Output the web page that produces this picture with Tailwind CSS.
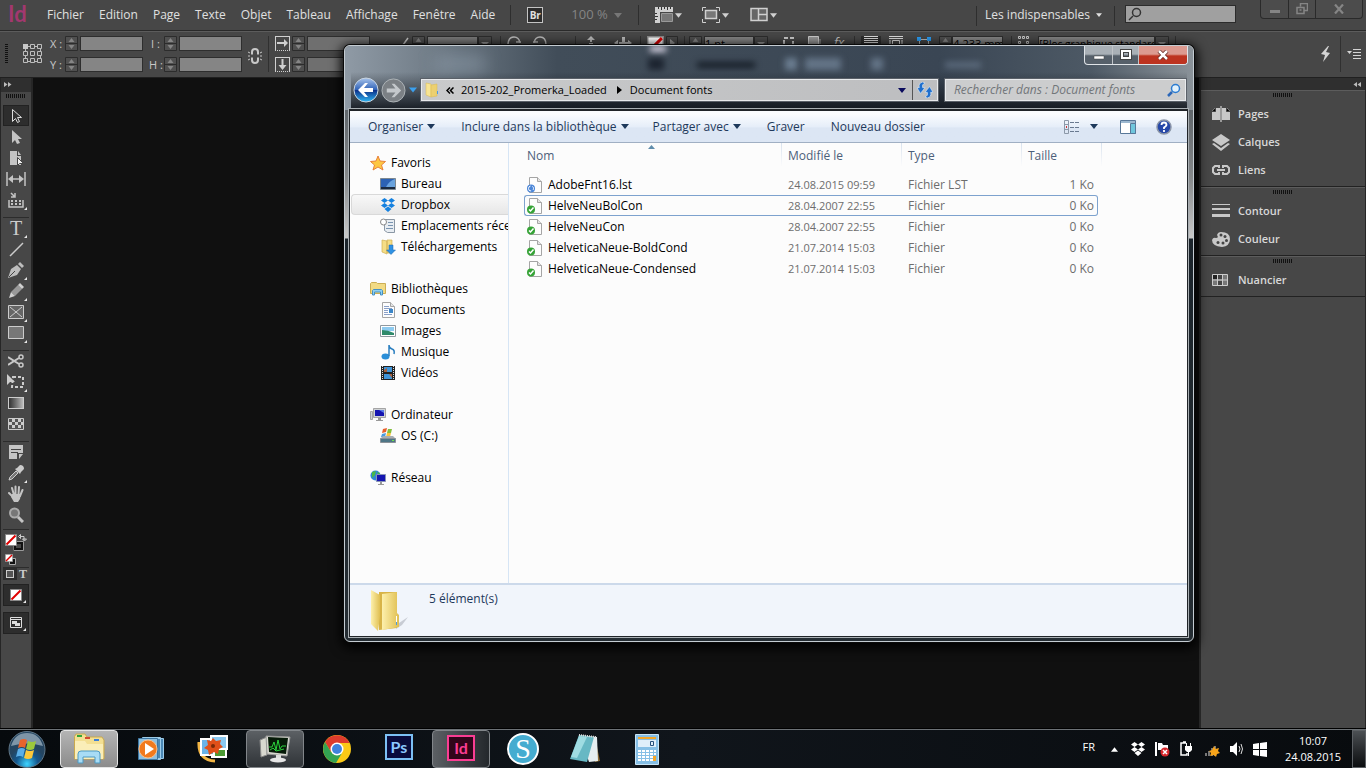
<!DOCTYPE html>
<html lang="fr">
<head>
    <meta charset="UTF-8">
    <meta name="viewport" content="width=device-width, initial-scale=1.0">
    <title>Document fonts</title>
    <script src="https://cdn.jsdelivr.net/npm/@tailwindcss/browser@4"></script>
</head>
<body class="h-screen overflow-hidden flex flex-col relative bg-[#101010] font-['Open_Sans','Noto_Sans',sans-serif] text-xs text-[#e0e0e0]">

    <!-- Shared symbols -->
    <svg class="hidden">
        <symbol id="spin" viewBox="0 0 13 15"><path fill="#505050" stroke="#2c2c2c" d="M.5.5h12v14H.5zM.5 7.500h12"/><path fill="#858585" d="M3.500 6l3-4 3 4zM3.500 9l3 4 3-4z"/></symbol>
        <symbol id="drop" viewBox="0 0 14 15"><path fill="#4a4a4a" stroke="#2c2c2c" d="M.5.5h13v14H.5z"/><path fill="#999" d="M3 6h8l-4 4z"/></symbol>
        <symbol id="down" viewBox="0 0 8 5"><path fill="currentColor" d="M0 0h8L4 5z"/></symbol>
        <symbol id="corner" viewBox="0 0 3 3"><path fill="#e8e8e8" d="M3 0v3H0z"/></symbol>
        <symbol id="grip" viewBox="0 0 20 5"><path stroke="#111" d="M.5 0v4m2-4v4m2-4v4m2-4v4m2-4v4m2-4v4m2-4v4m2-4v4m2-4v4m2-4v4"/></symbol>
        <symbol id="none" viewBox="0 0 12 12"><path fill="#fff" stroke="#8a8a8a" d="M.5.5h11v11H.5z"/><path stroke="#e00000" stroke-width="2" d="M1.500 10.500l9-9"/></symbol>
        <symbol id="dropbox" viewBox="0 0 16 16"><path fill="currentColor" d="M4.500 1L8 3.500 4.500 6 1 3.500zM11.500 1L15 3.500 11.500 6 8 3.500zM4.500 6L8 8.500 4.500 11 1 8.500zM11.500 6L15 8.500 11.500 11 8 8.500zM4.500 12L8 9.500l3.500 2.500L8 15z"/></symbol>
        <symbol id="sheet" viewBox="0 0 16 16"><path fill="#fdfdfd" stroke="#a5a5a5" d="M2.500.5h8l4 4v11h-12z"/><path fill="#e4e4e4" stroke="#a5a5a5" d="M10.500.5v4h4"/></symbol>
        <symbol id="synced" viewBox="0 0 16 16"><use href="#sheet"/><circle cx="4" cy="11.500" r="4" fill="#35a336"/><path fill="none" stroke="#fff" stroke-width="1.500" d="M2 11.500L3.500 13l3-3.500"/></symbol>
    </svg>

    <!-- InDesign menu bar -->
    <header class="h-[31px] shrink-0 flex items-start bg-[#474747] border-b border-[#2a2a2a]">
        <span class="w-[47px] pl-2 text-[22px] leading-7 font-bold text-[#a2386f] font-['Lato',sans-serif]">Id</span>
        <nav class="flex gap-[15px] h-[30px] items-center">
            <a href="#">Fichier</a>
            <a href="#">Edition</a>
            <a href="#">Page</a>
            <a href="#">Texte</a>
            <a href="#">Objet</a>
            <a href="#">Tableau</a>
            <a href="#">Affichage</a>
            <a href="#">Fenêtre</a>
            <a href="#">Aide</a>
        </nav>
        <div class="ml-[15px] h-[30px] flex items-center">
            <span class="w-px h-5 bg-[#2e2e2e]"></span>
            <button class="ml-4 w-4 h-4 border border-[#c4c4c4] bg-[#2d2d2d] text-[10px] leading-3 font-bold">Br</button>
            <span class="ml-7 text-[13px] text-[#858585]">100 %</span>
            <svg class="ml-1.5 w-2 h-[5px] text-[#777]"><use href="#down"/></svg>
            <span class="ml-4 w-px h-5 bg-[#2e2e2e]"></span>
            <button class="ml-4 flex items-center gap-0.5 text-[#d0d0d0]" aria-label="Options d'affichage">
                <svg class="w-[18px] h-4" viewBox="0 0 18 16"><path fill="#d0d0d0" d="M0 0h18v5H5v11H0z"/><path stroke="#333" d="M3.500 0v2m3-2v3m3-3v2m3-2v3m3-3v2M0 6.500h2m-2 3h3m-3 3h2"/><path fill="#777" stroke="#999" d="M6.500 6.500h11v8h-11z"/></svg>
                <svg class="w-[7px] h-[5px]"><use href="#down"/></svg>
            </button>
            <button class="ml-5 flex items-center gap-0.5 text-[#d0d0d0]" aria-label="Mode d'écran">
                <svg class="w-[18px] h-4" viewBox="0 0 18 16"><path fill="none" stroke="#d0d0d0" d="M.5 4V.5H4m10 0h3.500V4m0 8v3.500H14m-10 0H.5V12"/><path fill="#777" stroke="#d0d0d0" stroke-width="1.500" d="M3.500 3.500h11v8h-11z"/></svg>
                <svg class="w-[7px] h-[5px]"><use href="#down"/></svg>
            </button>
            <button class="ml-[21px] flex items-center gap-0.5 text-[#d0d0d0]" aria-label="Disposition">
                <svg class="w-[18px] h-4" viewBox="0 0 18 16"><path fill="#666" stroke="#d0d0d0" stroke-width="1.500" d="M1 1.500h16v12H1zM8.500 1v12M9 7.500h8"/></svg>
                <svg class="w-[7px] h-[5px]"><use href="#down"/></svg>
            </button>
        </div>
        <div class="ml-auto flex items-start">
            <span class="mt-1.5 w-px h-5 bg-[#2e2e2e]"></span>
            <button class="ml-2 h-[29px] flex items-center gap-1.5 whitespace-nowrap">Les indispensables
                <svg class="w-[6px] h-1"><use href="#down"/></svg>
            </button>
            <span class="ml-3 mt-1.5 w-px h-5 bg-[#2e2e2e]"></span>
            <label class="ml-2.5 mt-[5px] w-[111px] h-[18px] flex items-center bg-[#a0a0a0] border border-[#2c2c2c]">
                <svg class="ml-0.5 w-3.5 h-3.5 shrink-0" viewBox="0 0 14 14"><path fill="none" stroke="#333" stroke-width="1.500" d="M1 13l4-4"/><circle cx="8.500" cy="5.500" r="4" fill="none" stroke="#333" stroke-width="1.500"/></svg>
                <input class="w-full outline-none" aria-label="Rechercher">
            </label>
            <div class="ml-6 mr-[3px] h-[19px] flex border border-t-0 border-[#2a2a2a] rounded-b divide-x divide-[#2a2a2a] bg-[#4c4c4c]">
                <button class="w-7 flex justify-center items-center" aria-label="Réduire"><svg class="w-2.5 h-3" viewBox="0 0 10 12"><path fill="#858585" d="M0 7h10v3H0z"/></svg></button>
                <button class="w-[27px] flex justify-center items-center" aria-label="Restaurer"><svg class="w-3 h-3" viewBox="0 0 12 12"><path fill="none" stroke="#858585" stroke-width="1.500" d="M4.500 3.500v-3h7v7h-3M1 4.500h7v6H1zM3.500 7h2"/></svg></button>
                <button class="w-[46px] flex justify-center items-center" aria-label="Fermer"><svg class="w-2.5 h-2.5" viewBox="0 0 10 10"><path stroke="#858585" stroke-width="2.200" d="M1 .5l8 9m0-9l-8 9"/></svg></button>
            </div>
        </div>
    </header>

    <!-- InDesign control bar -->
    <section class="h-[47px] shrink-0 flex items-start pt-1 bg-[#474747] border-t border-b border-t-[#5c5c5c] border-b-[#202020] text-[11px] text-black overflow-hidden">
        <svg class="ml-[5px] mt-2 w-[3px] h-5" viewBox="0 0 3 20"><path stroke="#111" d="M0 .5h3m-3 2h3m-3 2h3m-3 2h3m-3 2h3m-3 2h3m-3 2h3m-3 2h3m-3 2h3m-3 2h3"/></svg>
        <svg class="ml-[15px] mt-2 w-5 h-5" viewBox="0 0 20 20"><path fill="none" stroke="#bdbdbd" d="M2.500 2.500h15v15h-15z"/><path fill="#474747" stroke="#bdbdbd" d="M7.500.5h4v4h-4zM14.500.5h4v4h-4zM.5 7.500h4v4h-4zM7.500 7.500h4v4h-4zM14.500 7.500h4v4h-4zM.5 14.500h4v4h-4zM7.500 14.500h4v4h-4zM14.500 14.500h4v4h-4z"/><path fill="#c8c8c8" d="M0 0h5v5H0z"/></svg>
        <div class="ml-[7px] grid grid-cols-[13px_13px_63px] gap-x-0.5 gap-y-1.5 leading-[15px] text-[#c8c8c8]">
            <label for="x" class="whitespace-nowrap">X :</label><svg class="w-[13px] h-[15px]"><use href="#spin"/></svg><input id="x" class="w-full h-[15px] bg-[#858585] border border-[#2e2e2e]">
            <label for="y" class="whitespace-nowrap">Y :</label><svg class="w-[13px] h-[15px]"><use href="#spin"/></svg><input id="y" class="w-full h-[15px] bg-[#858585] border border-[#2e2e2e]">
        </div>
        <div class="ml-1.5 grid grid-cols-[13px_13px_63px] gap-x-0.5 gap-y-1.5 leading-[15px] text-[#c8c8c8]">
            <label for="w" class="whitespace-nowrap pl-0.5">I :</label><svg class="w-[13px] h-[15px]"><use href="#spin"/></svg><input id="w" class="w-full h-[15px] bg-[#858585] border border-[#2e2e2e]">
            <label for="h" class="whitespace-nowrap">H :</label><svg class="w-[13px] h-[15px]"><use href="#spin"/></svg><input id="h" class="w-full h-[15px] bg-[#858585] border border-[#2e2e2e]">
        </div>
        <svg class="ml-1.5 mt-3 w-3.5 h-4" viewBox="0 0 14 16"><path fill="none" stroke="#c8c8c8" stroke-width="2" d="M4 6.500V4q0-3 3-3t3 3v2.500M4 9.500V12q0 3 3 3t3-3V9.500"/><path stroke="#c8c8c8" d="M0 4l2 1m-2 3h2m-2 4l2-1m12-7l-2 1m2 3h-2m2 4l-2-1"/></svg>
        <span class="ml-1.5 w-px h-9 bg-[#303030]"></span>
        <div class="ml-1.5 grid grid-cols-[15px_13px_63px] gap-x-0.5 gap-y-1.5">
            <svg class="w-[15px] h-[15px]" viewBox="0 0 15 15"><path fill="none" stroke="#d0d0d0" d="M0 .5h15M.5 0v15M14.500 0v15"/><path stroke="#d0d0d0" stroke-dasharray="1 1" d="M0 14.500h15"/><path fill="#d0d0d0" d="M2 6h7V3l4 4-4 4V8H2z"/></svg>
            <svg class="w-[13px] h-[15px]"><use href="#spin"/></svg><input aria-label="Échelle X" class="w-full h-[15px] bg-[#6f6f6f] border border-[#2e2e2e]">
            <svg class="w-[15px] h-[15px]" viewBox="0 0 15 15"><path fill="none" stroke="#d0d0d0" d="M0 .5h15M.5 0v15M14.500 0v15"/><path stroke="#d0d0d0" stroke-dasharray="1 1" d="M0 14.500h15"/><path fill="#d0d0d0" d="M6.500 2h2v6h3l-4 5-4-5h3z"/></svg>
            <svg class="w-[13px] h-[15px]"><use href="#spin"/></svg><input aria-label="Échelle Y" class="w-full h-[15px] bg-[#6f6f6f] border border-[#2e2e2e]">
        </div>
        <svg class="ml-8 w-2.5 h-3" viewBox="0 0 10 12"><path fill="none" stroke="#c8c8c8" stroke-width="1.500" d="M6 2L1 9h8"/></svg>
        <svg class="w-[13px] h-[15px]"><use href="#spin"/></svg>
        <input aria-label="Angle" class="ml-0.5 w-[51px] h-[15px] bg-[#7a7a7a] border border-[#2e2e2e]">
        <svg class="w-3.5 h-[15px]"><use href="#drop"/></svg>
        <span class="ml-2 w-px h-9 bg-[#303030]"></span>
        <svg class="ml-1.5 w-[14px] h-3" viewBox="0 0 14 12"><path fill="none" stroke="#bbb" stroke-width="1.500" d="M1 9q0-8 6-8 5 0 6 6m-4-1h5"/></svg>
        <svg class="ml-3 w-[14px] h-3" viewBox="0 0 14 12"><path fill="none" stroke="#bbb" stroke-width="1.500" d="M13 9q0-8-6-8-5 0-6 6m4-1H0"/></svg>
        <span class="ml-7 w-px h-9 bg-[#303030]"></span>
        <svg class="ml-2 w-[14px] h-3" viewBox="0 0 14 12"><path fill="#bbb" d="M7 0l4 4H8v2H6V4H3zM5 7h4v4H5z"/></svg>
        <svg class="ml-4 w-[18px] h-3" viewBox="0 0 18 12"><path fill="#bbb" d="M0 7l4-3v6zM18 7l-4-3v6zM8 1h3v9H8zM5 6h9v2H5z"/></svg>
        <span class="ml-2 w-px h-9 bg-[#303030]"></span>
        <svg class="ml-1.5 w-[17px] h-[17px]"><use href="#none"/></svg>
        <svg class="ml-0.5 w-3 h-[15px]" viewBox="0 0 12 15"><path fill="#4a4a4a" stroke="#2c2c2c" d="M.5.5h11v14H.5z"/><path fill="#999" d="M4 3l5 4-5 4z"/></svg>
        <span class="ml-1.5 w-px h-9 bg-[#303030]"></span>
        <svg class="ml-1 w-[13px] h-[15px]"><use href="#spin"/></svg>
        <input aria-label="Épaisseur" value="1 pt" class="ml-0.5 w-[50px] h-[15px] bg-[#858585] border border-[#2e2e2e]">
        <svg class="w-3.5 h-[15px]"><use href="#drop"/></svg>
        <svg class="ml-3.5 w-3.5 h-3.5" viewBox="0 0 14 14"><path fill="none" stroke="#ccc" stroke-width="2" stroke-dasharray="4 2" d="M2 2h9v9H2z"/></svg>
        <svg class="ml-3 w-3.5 h-3.5" viewBox="0 0 14 14"><path fill="#999" stroke="#ccc" d="M.5.5h10v10H.5z"/><path stroke="#777" stroke-width="2" d="M12 3v10"/></svg>
        <span class="ml-3 text-[13px] leading-3 italic text-[#ccc]">fx</span>
        <span class="ml-2.5 w-px h-9 bg-[#303030]"></span>
        <svg class="ml-1.5 w-5 h-4 bg-[#2f2f2f]" viewBox="0 0 20 16"><path stroke="#ddd" d="M3 .5h14M3 2.500h14M3 4.500h14M3 6.500h14"/></svg>
        <svg class="ml-2 w-3.5 h-4" viewBox="0 0 14 16"><path stroke="#ddd" d="M0 .5h14M0 2.500h14"/><path fill="none" stroke="#ddd" d="M3.500 9V4.500h7V9M1 4v8m12-8v8"/></svg>
        <svg class="ml-3.5 w-3.5 h-4" viewBox="0 0 14 16"><path stroke="#bbb" d="M1 3.500h12M2.500 4v8m9-8v8"/><path fill="#2a9df4" d="M0 1h4v4H0zM10 1h4v4h-4z"/></svg>
        <svg class="ml-2 w-[13px] h-[15px]"><use href="#spin"/></svg>
        <input aria-label="Habillage" value="4,233 mm" class="w-[51px] h-[15px] bg-[#858585] border border-[#2e2e2e]">
        <span class="ml-2 w-px h-9 bg-[#303030]"></span>
        <svg class="ml-1.5 w-3 h-3.5" viewBox="0 0 12 14"><path fill="none" stroke="#ccc" d="M.5.5h2v2h-2zM4.500.5h2v2h-2zM8.500.5h2v2h-2zM.5 5.500h2v2h-2zM8.500 5.500h2v2h-2z"/></svg>
        <select aria-label="Style d'objet" class="ml-2 w-[117px] h-[15px] text-[10px] leading-3 appearance-none bg-[#858585] border border-[#2e2e2e]"><option>[Bloc graphique standard]</option></select>
        <svg class="w-3.5 h-[15px]"><use href="#drop"/></svg>
        <span class="ml-1.5 w-px h-9 bg-[#303030]"></span>
        <svg class="ml-auto mt-2.5 w-3 h-4 shrink-0" viewBox="0 0 12 16"><path fill="#d4d4d4" d="M8 0L1 8l4 1-2 7 7-9-4-1 3-6z"/></svg>
        <span class="ml-2 w-px h-9 bg-[#303030]"></span>
        <svg class="ml-1.5 mr-[5px] mt-3 w-3.5 h-3 shrink-0" viewBox="0 0 14 12"><path fill="#d4d4d4" d="M0 3h5L2.500 6z"/><path stroke="#d4d4d4" d="M6 1.500h8M6 4.500h8M6 7.500h8M6 10.500h8"/></svg>
    </section>

    <main class="flex-1 min-h-0 flex border-b border-black">
        <!-- Tools -->
        <aside class="w-[33px] shrink-0 flex flex-col bg-[#474747] border-l border-r-2 border-[#262626]">
            <div class="h-3.5 shrink-0 bg-[#2f2f2f] pt-1 pl-[3px]"><svg class="w-2 h-[5px]" viewBox="0 0 8 5"><path fill="#bbb" d="M0 0l3.500 2.500L0 5zM4 0l3.500 2.500L4 5z"/></svg></div>
            <svg class="mx-auto mt-0.5 w-5 h-[5px] shrink-0"><use href="#grip"/></svg>
            <div class="mt-1.5 mx-0.5 flex flex-col *:h-[21px] *:shrink-0 *:flex *:items-center *:justify-center *:relative">
                <button class="bg-[#2d2d2d] border border-[#222]" aria-label="Sélection"><svg class="w-4 h-4" viewBox="0 0 16 16"><path fill="#333" stroke="#ddd" d="M4.500 1.500v12l3-3 2 4 2-1-2-4h4z"/></svg></button>
                <button aria-label="Sélection directe"><svg class="w-4 h-4" viewBox="0 0 16 16"><path fill="#c4c4c4" d="M4 1v13l3-3 2 4 3-1-2-4h4z"/></svg></button>
                <button aria-label="Page"><svg class="w-4 h-4" viewBox="0 0 16 16"><path fill="#c4c4c4" d="M2 1h7v5h4v9H2zM10 1l3 4h-3z"/><path fill="#eee" stroke="#444" d="M9.500 7.500v8l2-2h4z"/></svg></button>
                <button aria-label="Espace"><svg class="w-5 h-4" viewBox="0 0 20 16"><path stroke="#c4c4c4" stroke-width="1.500" d="M1 1v14M19 1v14M4 8h12"/><path fill="#c4c4c4" d="M2 8l5-4v8zM18 8l-5-4v8z"/></svg></button>
                <button aria-label="Récupérateur de contenu"><svg class="w-4 h-4" viewBox="0 0 16 16"><path fill="none" stroke="#c4c4c4" stroke-width="1.500" d="M1 8v7h14V8M3 1l4 4M7 1v4H3"/><path fill="#c4c4c4" d="M3 8h2v2H3zM7 8h2v2H7zM11 8h2v2h-2zM3 11h2v2H3zM7 11h2v2H7zM11 11h2v2h-2z"/></svg><svg class="absolute right-0.5 bottom-0 w-[3px] h-[3px]"><use href="#corner"/></svg></button>
                <button class="mt-[7px] border-t border-[#2c2c2c] font-['Liberation_Serif',serif] text-[20px] text-[#ccc]">T<svg class="absolute right-0.5 bottom-0 w-[3px] h-[3px]"><use href="#corner"/></svg></button>
                <button aria-label="Trait"><svg class="w-4 h-4" viewBox="0 0 16 16"><path stroke="#ccc" stroke-width="1.500" d="M2 15L15 2"/></svg></button>
                <button aria-label="Plume"><svg class="w-4 h-4" viewBox="0 0 16 16"><path fill="#bdbdbd" d="M0 16l3-9 6-4 4 4-4 6zM10 2l2-2 4 4-2 2z"/><path stroke="#444" d="M1 15l6-6"/></svg><svg class="absolute right-0.5 bottom-0 w-[3px] h-[3px]"><use href="#corner"/></svg></button>
                <button aria-label="Crayon"><svg class="w-4 h-4" viewBox="0 0 16 16"><path fill="#999" d="M3 9l7-7 4 4-7 7z"/><path fill="#d0d0d0" d="M10 2l2-2 4 4-2 2zM3 9l4 4-6 2z"/></svg><svg class="absolute right-0.5 bottom-0 w-[3px] h-[3px]"><use href="#corner"/></svg></button>
                <button aria-label="Bloc rectangulaire"><svg class="w-4 h-[14px]" viewBox="0 0 16 14"><path fill="#666" stroke="#ccc" d="M.5.5h15v13H.5zM2 2l12 10M14 2L2 12"/></svg><svg class="absolute right-0.5 bottom-0 w-[3px] h-[3px]"><use href="#corner"/></svg></button>
                <button aria-label="Rectangle"><svg class="w-4 h-[14px]" viewBox="0 0 16 14"><path fill="#777" stroke="#ccc" d="M.5.5h15v12H.5z"/></svg><svg class="absolute right-0.5 bottom-0 w-[3px] h-[3px]"><use href="#corner"/></svg></button>
                <button class="mt-[7px] border-t border-[#2c2c2c]" aria-label="Ciseaux"><svg class="w-4 h-4" viewBox="0 0 16 16"><path fill="none" stroke="#c8c8c8" stroke-width="2" d="M0 4l11 7M0 12l11-7"/><circle cx="13" cy="4" r="2" fill="none" stroke="#c8c8c8" stroke-width="1.500"/><circle cx="13" cy="12" r="2" fill="none" stroke="#c8c8c8" stroke-width="1.500"/></svg></button>
                <button aria-label="Transformation"><svg class="w-[18px] h-4" viewBox="0 0 18 16"><path fill="none" stroke="#ccc" stroke-width="2" stroke-dasharray="3 2" d="M6 3h10v10H5z"/><path fill="#ccc" d="M0 0v11l3-3h5z"/></svg><svg class="absolute right-0.5 bottom-0 w-[3px] h-[3px]"><use href="#corner"/></svg></button>
                <button aria-label="Nuance de dégradé"><span class="w-4 h-3 border border-[#ccc] bg-linear-to-r from-[#333] to-[#bbb]"></span></button>
                <button aria-label="Contour progressif de dégradé"><svg class="w-4 h-3" viewBox="0 0 16 12"><path fill="#555" stroke="#ccc" d="M.5.5h15v11H.5z"/><path fill="#ccc" d="M1 4h3v3H1zM7 4h3v3H7zM4 1h3v3H4zM10 1h3v3h-3zM4 7h3v3H4zM10 7h3v3h-3zM13 4h2v3h-2z"/></svg></button>
                <button class="mt-[7px] border-t border-[#2c2c2c]" aria-label="Note"><svg class="w-4 h-4" viewBox="0 0 16 16"><path fill="#c4c4c4" d="M1 1h14v8H9v6H1zM11 10h4l-4 5z"/><path stroke="#444" d="M3 5.500h10M3 8.500h7"/></svg></button>
                <button aria-label="Pipette"><svg class="w-4 h-4" viewBox="0 0 16 16"><path fill="#777" stroke="#ccc" d="M1 15l1-3 6-6 2 2-6 6z"/><path fill="#ccc" d="M7 4l5 5 1-2 3-3q0-4-4-4L9 3z"/></svg><svg class="absolute right-0.5 bottom-0 w-[3px] h-[3px]"><use href="#corner"/></svg></button>
                <button aria-label="Main"><svg class="w-4 h-[17px]" viewBox="0 0 16 17"><path fill="none" stroke="#c4c4c4" stroke-width="2" stroke-linecap="round" d="M1 8l4 4M4 3l2 7M7.500 1.500V9M11 2l-.5 7M14.500 5L12 11"/><path fill="#c4c4c4" d="M4 9h9l-1 5-2 3H6l-3-5z"/></svg></button>
                <button aria-label="Zoom"><svg class="w-4 h-4" viewBox="0 0 16 16"><circle cx="6.500" cy="6" r="4.500" fill="#777" stroke="#aaa" stroke-width="2"/><path stroke="#c4c4c4" stroke-width="3" d="M10 10l5 5"/></svg></button>
            </div>
            <div class="mt-1 mx-0.5 pt-1 border-t border-[#2c2c2c] flex flex-col gap-px">
                <svg class="ml-0.5 w-[22px] h-[19px]" viewBox="0 0 22 19"><path fill="none" stroke="#999" d="M9 7.500h9.500v9H9z"/><path fill="none" stroke="#111" stroke-width="2" d="M10 9h7v6h-7z"/><use href="#none" width="12" height="12"/><path fill="none" stroke="#ccc" d="M15 2.500h4v4M13.500 2.500l2-2v4zM19.500 7l2-2h-4z"/></svg>
                <svg class="ml-0.5 w-3 h-3" viewBox="0 0 12 12"><path fill="#111" stroke="#aaa" d="M4.500 4.500h6v6h-6z"/><use href="#none" width="8" height="8"/></svg>
                <div class="flex border-t border-[#2c2c2c]">
                    <button class="w-3.5 h-3 bg-[#2d2d2d] flex items-center justify-center" aria-label="Conteneur"><span class="w-2 h-2 border border-[#ccc] bg-[#555]"></span></button>
                    <button class="w-3 h-3 text-[12px] leading-3 font-bold font-['Liberation_Serif',serif] text-[#ccc]">T</button>
                </div>
            </div>
            <button class="mt-1 mx-0.5 h-[22px] flex items-center justify-center relative bg-[#2d2d2d] border border-[#222]" aria-label="Sans"><svg class="w-3 h-3"><use href="#none"/></svg><svg class="absolute right-0.5 bottom-0.5 w-[3px] h-[3px]"><use href="#corner"/></svg></button>
            <button class="mt-1.5 mx-0.5 h-[22px] flex items-center justify-center relative bg-[#2d2d2d] border border-[#222]" aria-label="Mode normal"><svg class="w-3 h-3" viewBox="0 0 12 12"><path fill="none" stroke="#ddd" d="M.5.5h11v10H.5zM0 2.500h12"/><path fill="#ddd" d="M2 4h5v3H2zM5 6h5v3H5z"/></svg><svg class="absolute right-0.5 bottom-0.5 w-[3px] h-[3px]"><use href="#corner"/></svg></button>
        </aside>

        <!-- Panels -->
        <aside class="ml-auto w-[167px] shrink-0 bg-[#474747] border-l-2 border-r border-[#262626] text-[11px] font-semibold leading-7 text-[#d8d8d8]">
            <div class="h-3 bg-[#2f2f2f] flex justify-end pt-1 pr-1"><svg class="w-2 h-[5px]" viewBox="0 0 8 5"><path fill="#bbb" d="M4 0L.5 2.500 4 5zM8 0L4.500 2.500 8 5z"/></svg></div>
            <div class="border-t border-[#5c5c5c] border-b border-b-[#222] pb-0.5">
                <svg class="mx-auto mt-0.5 mb-0.5 w-5 h-[5px]"><use href="#grip"/></svg>
                <a href="#" class="flex items-center gap-2 pl-[11px]"><svg class="w-[18px] h-4" viewBox="0 0 18 16"><path fill="#c8c8c8" d="M0 14V5l3-3h5v12zM18 14V5l-3-3h-5v12z"/><path stroke="#444" d="M0 5.500h3.500V2M18 5.500h-3.500V2"/><path stroke="#eee" d="M9 0v16"/></svg>Pages</a>
                <a href="#" class="flex items-center gap-2 pl-[11px]"><svg class="w-[18px] h-[17px]" viewBox="0 0 18 17"><path fill="#c8c8c8" d="M9 0l9 6-9 6-9-6zM0 10l2-1 7 5 7-5 2 1-9 7z"/></svg>Calques</a>
                <a href="#" class="flex items-center gap-2 pl-[11px]"><svg class="w-[18px] h-3" viewBox="0 0 18 12"><path fill="none" stroke="#c8c8c8" stroke-width="2" d="M7 4V2H3L1 4v4l2 2h4V8M11 4V2h4l2 2v4l-2 2h-4V8M5 6h8"/></svg>Liens</a>
            </div>
            <div class="border-t border-[#5c5c5c] border-b border-b-[#222] pb-0.5">
                <svg class="mx-auto mt-0.5 mb-0.5 w-5 h-[5px]"><use href="#grip"/></svg>
                <a href="#" class="flex items-center gap-2 pl-[11px]"><svg class="w-[18px] h-3.5" viewBox="0 0 18 14"><path fill="#c8c8c8" d="M0 0h18v1H0zM0 4h18v2H0zM0 10h18v3H0z"/></svg>Contour</a>
                <a href="#" class="flex items-center gap-2 pl-[11px]"><svg class="w-[18px] h-[15px]" viewBox="0 0 18 15"><path fill="#c8c8c8" d="M9 0q9 0 9 7t-8 8Q0 14 0 8q1-3 4-2 3 0 1-3 1-3 4-3z"/><g fill="#444"><circle cx="9" cy="3" r="1.500"/><circle cx="13" cy="4.500" r="1.500"/><circle cx="14.500" cy="8.500" r="1.500"/><circle cx="11" cy="11" r="1.500"/><circle cx="6" cy="10.500" r="1.500"/></g></svg>Couleur</a>
            </div>
            <div class="border-t border-[#5c5c5c] border-b border-b-[#222] pb-0.5">
                <svg class="mx-auto mt-0.5 mb-0.5 w-5 h-[5px]"><use href="#grip"/></svg>
                <a href="#" class="flex items-center gap-2 pl-[11px]"><svg class="w-[18px] h-3" viewBox="0 0 18 12"><path fill="#777" stroke="#ccc" d="M.5.5h15v11H.5zM5.500 0v12M10.500 0v12M0 6h16"/><path fill="#222" d="M1 1h4v4H1z"/><path fill="#444" d="M6 1h4v4H6zM6 7h4v4H6z"/></svg>Nuancier</a>
            </div>
        </aside>
    </main>

    <!-- Taskbar -->
    <footer class="h-[39px] shrink-0 flex items-stretch border-t border-[#6d7276] bg-[linear-gradient(90deg,#060a0d,#10151b_50%,#080b0e)] text-white">
        <button class="ml-2 mr-[14px] w-[38px] flex items-center justify-center" aria-label="Démarrer">
            <svg class="w-[38px] h-[37px]" viewBox="0 0 38 37"><defs><radialGradient id="orb" cy=".9"><stop offset="0" stop-color="#3fd4ff"/><stop offset=".6" stop-color="#14588f"/><stop offset="1" stop-color="#244561"/></radialGradient></defs><circle cx="19" cy="18.500" r="18" fill="url(#orb)" stroke="#5f7687"/><path fill="#d8e6ee" opacity=".5" d="M3 15Q7 2 19 2t16 13q-16-5-32 0z"/><path fill="#e8642c" d="M12 9q4-2 7 0l-2 8q-3-2-7 0z"/><path fill="#9cc93c" d="M20 10q4 2 8 0l-2 8q-4 2-8 0z"/><path fill="#5aaee8" d="M10 18q4-2 7 0l-2 8q-3-2-7 0z"/><path fill="#fcc83a" d="M18 19q4 2 8 0l-2 8q-4 2-8 0z"/></svg>
        </button>
        <div class="flex gap-1 *:w-[58px] *:flex *:items-center *:justify-center">
            <button class="border border-[#e4e4e4] rounded-sm bg-linear-to-b from-[#b4b4b4] to-[#8c8c8c]" aria-label="Explorateur">
                <svg class="w-8 h-8" viewBox="0 0 32 32"><path fill="#f3df92" stroke="#c9a94e" d="M1.500 26V3.500L3 1h9l2 3h15l2 3v19z"/><path fill="#faeeb8" d="M2 8h10l2 3h16v15H2z"/><path fill="#31a53c" d="M4 2h5v2H4z"/><path fill="#d34a31" d="M12 4h5v2h-5z"/><path fill="#3d7fd6" d="M21 6h5v2h-5z"/><path fill="#a8dcf5" stroke="#4d9ac4" d="M5 30V21q0-3 3-3h16q3 0 3 3v9h-5v-6H10v6z"/></svg>
            </button>
            <button aria-label="Lecteur Windows Media"><svg class="w-7 h-7" viewBox="0 0 28 28"><path fill="#4b88b5" stroke="#9ccbe8" d="M8.500 3.500h18v20h-18zM5.500 2.500h18v22h-18z"/><path fill="#8fc0e0" stroke="#3c77a3" d="M1.500 3.500h19v21h-19z"/><circle cx="11" cy="14" r="9" fill="#f17a1e" stroke="#fbc08a"/><path fill="#fff" d="M8 8l9 6-9 6z"/></svg></button>
            <button aria-label="Galerie de photos"><svg class="w-8 h-8" viewBox="0 0 32 32"><path fill="none" stroke="#f2b544" stroke-width="3" d="M2 9q-1 18 16 19"/><path fill="#4c9a34" stroke="#fff" stroke-width="2" d="M15 13h14v11H15z"/><path fill="#6ab3e8" stroke="#fff" stroke-width="2" d="M4 6h13v16H4z"/><path fill="#8ac8f0" stroke="#fff" stroke-width="2" d="M14 3h16v13H14z"/><path fill="#e0501a" d="M16 5l3 3 5-1-1 4 3 3-4 2-1 5-4-2-5 3-1-5-4-2 4-3-1-5 4 1z"/><circle cx="16" cy="13" r="2" fill="#7a2a08"/></svg></button>
            <button class="border border-[#82868a] rounded-sm bg-linear-to-b from-[#5c6064] to-[#303438]" aria-label="Moniteur de ressources"><svg class="w-8 h-7" viewBox="0 0 32 28"><path fill="#d8d8d0" stroke="#888" d="M1 5l7-3v18l-6 2z"/><path fill="#d8d8d0" stroke="#999" d="M7 1l24 1-3 19-20-2z"/><path fill="#061a08" d="M9 2l20 1-2 16-17-2z"/><path fill="none" stroke="#2bd33c" d="M10 12h3l2-5 2 8 2-10 2 9 2-3h4M11 15l3-2 3 3 8-2"/><path fill="#ddd" d="M17 20h5v4h-5z"/><ellipse cx="19" cy="25" rx="8" ry="2.500" fill="#e6e6e6"/></svg></button>
            <button aria-label="Chrome"><svg class="w-7 h-7" viewBox="0 0 28 28"><circle cx="14" cy="14" r="14" fill="#fbc916"/><path fill="#dd3b2d" d="M2 7a14 14 0 0 1 24.500 1H14L8 17z"/><path fill="#33a352" d="M2 7a14 14 0 0 0 11 21l6-10-5 2-6-3z"/><circle cx="14" cy="14" r="6.500" fill="#fff"/><circle cx="14" cy="14" r="5" fill="#3f83dd"/></svg></button>
            <button aria-label="Photoshop"><span class="mb-1 w-7 h-[26px] border-2 border-[#7cc0f4] bg-[#090b3c] text-[#8cc8ff] text-[16px] leading-[22px] font-bold font-['Lato',sans-serif]">Ps</span></button>
            <button class="border border-[#82868a] rounded-sm bg-linear-to-r from-[#5c6064] to-[#24282c]" aria-label="InDesign"><span class="mb-0.5 w-7 h-[26px] border-2 border-[#fb3d93] bg-[#31051a] text-[#fb3d93] text-[16px] leading-[22px] font-bold font-['Lato',sans-serif]">Id</span></button>
            <button aria-label="S"><span class="w-8 h-8 rounded-full border-2 border-white bg-[#45acd0] font-['Liberation_Serif',serif] text-[28px] leading-7">S</span></button>
            <button aria-label="Bloc-notes"><svg class="w-8 h-[30px]" viewBox="0 0 32 30"><path fill="#8a6a34" d="M26 3l5 24-5 1z"/><path fill="#e6eef0" d="M11 1l17 2 1 24-9 1z"/><path fill="#67b8c4" d="M10 1l15 2-7 25-17-3z"/><path fill="#9fdce2" d="M10 2l8 1L8 24l-6-1z"/><path stroke="#ddd" stroke-dasharray="1 1" stroke-width="2" d="M10 1l17 2"/></svg></button>
            <button aria-label="Calculatrice"><svg class="w-6 h-[31px]" viewBox="0 0 24 31"><path fill="#86bfe6" stroke="#c8e4f6" d="M.5.5h23v30H.5z"/><path fill="#f5a72a" d="M3 3h18v2H3z"/><path fill="#dfeefa" d="M3 6h18v7H3z"/><path fill="none" stroke="#27507d" d="M15.500 7.500h3v4h-3z"/><path stroke="#fff" stroke-width="2" stroke-dasharray="3 1" d="M3 17h18M3 20h18M3 23h18M3 26h18"/><path fill="#f5a72a" d="M18 22h3v5h-3z"/></svg></button>
        </div>
        <div class="ml-auto flex items-center text-[11px]">
            <span class="pb-1">FR</span>
            <svg class="ml-4 w-[7px] h-[5px]" viewBox="0 0 8 5"><path fill="#fff" d="M0 5h8L4 0z"/></svg>
            <svg class="ml-3 w-4 h-4"><use href="#dropbox"/></svg>
            <svg class="ml-2 w-4 h-4" viewBox="0 0 16 16"><path fill="#fff" d="M1 1h2v14H1zM4 2h4l1 2h5v6H8L7 9H4z"/><circle cx="11" cy="11" r="4.500" fill="#d6262b"/><path stroke="#fff" stroke-width="1.500" d="M9 9l4 4m0-4l-4 4"/></svg>
            <svg class="ml-2 w-4 h-4" viewBox="0 0 16 16"><path fill="none" stroke="#fff" stroke-width="1.500" d="M8 2H3v12h6v-2M5 1h3"/><path fill="#fff" d="M7 5h7v4l-2 2H9L7 9zM8 2h1v3H8zM12 2h1v3h-1zM10 11h1v4h-1z"/></svg>
            <svg class="ml-2.5 w-4 h-4" viewBox="0 0 16 16"><path fill="#777" d="M1 12h2v3H1zM4 10h2v5H4zM7 7h2v8H7zM10 5h2v10h-2z"/><path fill="#f9a51a" d="M10 5l1.500 3L15 7l-1 3 2 2-3 1-1 3-2-2-4 1 1-3-2-2 3-1z"/></svg>
            <svg class="ml-2 w-4 h-4" viewBox="0 0 16 16"><path fill="#fff" d="M2 5h3l4-4v14l-4-4H2z"/><path fill="none" stroke="#ddd" d="M11 5q2 3 0 6M13 3q3 5 0 10"/></svg>
            <svg class="ml-2 w-4 h-4" viewBox="0 0 16 16"><path fill="#fff" d="M1 3l6-1v6H1zM8 2l7-1v7H8zM1 9h6v6l-6-1zM8 9h7v7l-7-1z"/></svg>
            <div class="ml-4 w-[58px] text-center leading-4 whitespace-nowrap"><div>10:07</div><div>24.08.2015</div></div>
            <button class="ml-2.5 w-3.5 h-full border border-[#5c6064] bg-linear-to-b from-[#4c5054] to-[#0c0e10]" aria-label="Afficher le bureau"></button>
        </div>
    </footer>

    <!-- Explorer window -->
    <div class="absolute left-[344px] right-[172px] top-[45px] bottom-[126px] flex flex-col overflow-hidden rounded-md border border-[#c4ccd2] shadow-[0_0_0_1px_#0a0a0a,0_3px_12px_3px_#000] text-black bg-[linear-gradient(#77797c_0,#60666b_64px,#85888a_130px,#c8c8c8_192px,#1b242b_193px,#252d33_100%)]">
        <div class="absolute inset-x-0 top-0 h-[64px] bg-[linear-gradient(90deg,#8f9aa5_0,#6c7883_12%,#414d59_25%,#3a4654_70%,#4d5965_88%,#8a9299_100%)]"></div>
        <div class="absolute inset-x-[6px] top-[26px] h-[40px] bg-[linear-gradient(transparent,#12171e)]"></div>
        <!-- Blurred controls seen through the glass -->
        <div class="absolute left-[90px] top-3 w-[50px] h-3 bg-[#93a1b0]/60 blur-sm"></div>
        <div class="absolute left-[305px] top-0 w-4 h-1.5 bg-[#d9d4e4] blur-[3px]"></div>
        <div class="absolute left-[303px] top-3 w-4 h-3 bg-[#1c2430] blur-[3px]"></div>
        <div class="absolute left-[352px] top-4 w-[58px] h-1.5 bg-[#161d27] blur-[3px]"></div>
        <div class="absolute left-[440px] top-3 w-3 h-3 bg-[#8ba0b8]/60 blur-[3px]"></div>
        <div class="absolute left-[460px] top-3 w-[36px] h-3 bg-[#8ba0b8]/50 blur-[3px]"></div>
        <div class="absolute left-[526px] top-3 w-3 h-3 bg-[#8ba0b8]/50 blur-[3px]"></div>
        <div class="absolute left-[600px] top-4 w-[36px] h-1.5 bg-[#8ba0b8]/40 blur-[3px]"></div>

        <div class="relative h-8 shrink-0 flex justify-end items-start">
            <div class="mr-[5px] h-[19px] flex rounded-b border border-t-0 border-[#e0e4e8] divide-x divide-[#c0c4c8] overflow-hidden bg-linear-to-b from-[#a9b0b6] from-45% to-[#56606a] to-55%">
                <button class="w-7 flex items-center justify-center" aria-label="Réduire"><svg class="w-3 h-3" viewBox="0 0 12 12"><path fill="#fff" stroke="#444" stroke-width=".5" d="M1 7h10v3H1z"/></svg></button>
                <button class="w-[26px] flex items-center justify-center" aria-label="Agrandir"><svg class="w-3 h-3" viewBox="0 0 12 12"><path fill="none" stroke="#444" stroke-width="4" d="M2 2h8v7H2z"/><path fill="none" stroke="#fff" stroke-width="2" d="M2 2h8v7H2z"/></svg></button>
                <button class="w-[48px] flex items-center justify-center bg-linear-to-b from-[#dc9a90] from-45% to-[#bd3320] to-55%" aria-label="Fermer"><svg class="w-3 h-2.5" viewBox="0 0 12 10"><path stroke="#5c2018" stroke-width="4" d="M2 1l8 8m0-8L2 9"/><path stroke="#fff" stroke-width="2.500" d="M2 1l8 8m0-8L2 9"/></svg></button>
            </div>
        </div>
        <!-- Address bar -->
        <div class="relative h-6 shrink-0 flex items-center pl-2 pr-[7px]">
            <button aria-label="Précédent"><svg class="w-[26px] h-[26px]" viewBox="0 0 26 26"><defs><linearGradient id="back" x2="0" y2="1"><stop offset="0" stop-color="#a8c4ec"/><stop offset=".48" stop-color="#3264b8"/><stop offset=".5" stop-color="#0c2c86"/><stop offset="1" stop-color="#2fb8f4"/></linearGradient></defs><circle cx="13" cy="13" r="12" fill="url(#back)" stroke="#c8d4e0"/><path fill="#fff" d="M5 13l7-7h3l-4 5h9v4h-9l4 5h-3z"/></svg></button>
            <button class="ml-0.5" aria-label="Suivant"><svg class="w-[25px] h-[25px]" viewBox="0 0 26 26"><circle cx="13" cy="13" r="12" fill="#7b8085" stroke="#aeb4b8"/><path fill="#c4c8cc" d="M21 13l-7-7h-3l4 5H6v4h9l-4 5h3z"/></svg></button>
            <svg class="ml-[3px] w-2 h-[6px] text-[#3ba0ee]"><use href="#down"/></svg>
            <div class="ml-1 flex-1 h-[22px] flex items-center border border-[#e8eaec] outline outline-[#5a6068] bg-linear-to-r from-[#c9cacb] to-[#bdbec0] text-[11px]">
                <svg class="ml-0.5 w-4 h-4" viewBox="0 0 16 16"><path fill="#f8e492" stroke="#d8b850" stroke-width=".5" d="M2 1l5 1v13l-5-2z"/><path fill="#ecd070" stroke="#d8b850" stroke-width=".5" d="M7 3l6-1v12l-6 1z"/><path fill="#4a9be4" d="M13 9h1v3h-1z"/></svg>
                <svg class="ml-1.5 w-2 h-[7px]" viewBox="0 0 8 7"><path fill="none" stroke="#000" stroke-width="1.500" d="M4 .5l-3 3 3 3M7.500.5l-3 3 3 3"/></svg>
                <a href="#" class="ml-[7px] whitespace-nowrap">2015-202_Promerka_Loaded</a>
                <svg class="ml-2.5 w-[5px] h-2" viewBox="0 0 5 8"><path d="M0 0l5 4-5 4z"/></svg>
                <a href="#" class="ml-2 whitespace-nowrap">Document fonts</a>
                <svg class="ml-auto mr-1.5 w-2 h-[5px] text-[#0a0a5c]"><use href="#down"/></svg>
                <button class="w-[25px] h-full border-l border-[#555] flex items-center justify-center" aria-label="Actualiser"><svg class="w-4 h-4" viewBox="0 0 14 14"><path fill="#1f6fce" stroke="#e8f2fc" stroke-width=".5" d="M5 0Q1 1 2 5H0l3 5 4-5H5q-1-3 2-4zM9 14q4-1 3-5h2l-3-5-4 5h2q1 3-2 4z"/></svg></button>
            </div>
            <label class="ml-[7px] w-[241px] h-[22px] flex items-center border border-[#e8eaec] outline outline-[#5a6068] bg-[#cccdce]">
                <input class="flex-1 min-w-0 pl-2 italic outline-none placeholder:text-[#72767a]" placeholder="Rechercher dans : Document fonts" aria-label="Rechercher">
                <svg class="mr-1 w-3.5 h-3.5" viewBox="0 0 14 14"><path stroke="#2b66b8" stroke-width="2.500" d="M1 13l4-4"/><circle cx="8.500" cy="5.500" r="4" fill="#e2f1fb" stroke="#2b7bd0" stroke-width="1.500"/></svg>
            </label>
        </div>

        <div class="relative mt-[7px] ml-1 mr-[5px] mb-1 flex-1 min-h-0 flex flex-col bg-[#fcfcfc] outline outline-[#aab0b4] border border-t-2 border-[#202428]">
            <!-- Command bar -->
            <div class="h-[32px] shrink-0 flex items-center pl-[18px] pr-[15px] text-[#1e395b] border-b border-[#a0afc3] bg-linear-to-b from-[#fafcfe] from-10% via-[#e6eef9] via-50% to-[#dce6f4] to-55% whitespace-nowrap">
                <button class="flex items-center gap-1">Organiser <svg class="w-2 h-[5px]"><use href="#down"/></svg></button>
                <button class="ml-[26px] flex items-center gap-1">Inclure dans la bibliothèque <svg class="w-2 h-[5px]"><use href="#down"/></svg></button>
                <button class="ml-6 flex items-center gap-1">Partager avec <svg class="w-2 h-[5px]"><use href="#down"/></svg></button>
                <button class="ml-[26px]">Graver</button>
                <button class="ml-[26px]">Nouveau dossier</button>
                <button class="ml-auto flex items-center gap-2.5" aria-label="Affichage">
                    <svg class="w-4 h-3.5" viewBox="0 0 16 14"><path fill="none" stroke="#8c98a8" d="M.5.5h4v13h-4zM0 4.500h5M0 9.500h5"/><path fill="#c33" d="M2 6h1v2H2z"/><path stroke="#6a7a90" stroke-dasharray="4 1" d="M6 2.500h9M6 7.500h9M6 11.500h9"/></svg>
                    <svg class="w-2 h-[5px]"><use href="#down"/></svg>
                </button>
                <button class="ml-[22px]" aria-label="Volet de visualisation"><svg class="w-4 h-3.5" viewBox="0 0 16 14"><path fill="#fff" stroke="#587899" d="M.5.5h15v13H.5z"/><path fill="#6fc6dc" stroke="#587899" d="M10.500 3.500h5v10h-5z"/><path fill="#9cb8d0" d="M1 1h14v2H1z"/></svg></button>
                <button class="ml-5" aria-label="Aide"><svg class="w-4 h-4" viewBox="0 0 16 16"><circle cx="8" cy="8" r="7" fill="#2648a8" stroke="#8c96a8" stroke-width="1.500"/><path fill="none" stroke="#fff" stroke-width="1.800" d="M5.500 6q0-2.500 2.500-2.500T10.500 6Q10 7.500 8 8.500V10M8 11v2"/></svg></button>
            </div>
            <div class="flex-1 min-h-0 flex">
                <!-- Navigation pane -->
                <nav class="w-[159px] shrink-0 overflow-hidden border-r border-[#d6e5f5] pt-[9px] whitespace-nowrap *:h-[21px] *:flex *:items-center *:gap-[5px]">
                    <a href="#" class="pl-5"><svg class="w-4 h-4 shrink-0" viewBox="0 0 16 16"><path fill="#fdc743" stroke="#e8803a" d="M8 1l2 5 5.500.5-4 3.500 1.500 5L8 12l-5 3 1.500-5-4-3.500L6 6z"/></svg>Favoris</a>
                    <a href="#" class="pl-[30px]"><svg class="w-4 h-4 shrink-0" viewBox="0 0 16 16"><path fill="#2c62b4" stroke="#7d8890" d="M.5 2.500h15v11H.5z"/><path fill="#69a3de" d="M6 11q3-6 9-8v8z"/><path fill="#1a2a40" d="M1 11h14v2H1z"/></svg>Bureau</a>
                    <a href="#" class="pl-7 ml-px border border-r-0 border-[#d9d9d9] rounded-l-sm bg-linear-to-b from-[#f8f8f8] to-[#e7e7e7]"><svg class="w-4 h-4 shrink-0 text-[#1581e0]"><use href="#dropbox"/></svg>Dropbox</a>
                    <a href="#" class="pl-[30px]"><svg class="w-4 h-4 shrink-0" viewBox="0 0 16 16"><path fill="#e8edf2" stroke="#8a97a4" d="M4.500 1.500h10v13h-7l-3-2z"/><path stroke="#7a94b0" d="M8 4.500h5M8 7.500h5M6 10.500h7"/><circle cx="3.500" cy="4" r="3" fill="#fff" stroke="#888"/></svg>Emplacements récents</a>
                    <a href="#" class="pl-[30px]"><svg class="w-4 h-4 shrink-0" viewBox="0 0 16 16"><path fill="#f5dd85" stroke="#d0b050" stroke-width=".7" d="M2 1l5 1v13l-5-2zM7 1h5v13H7z"/><path fill="#2f92e4" stroke="#1c66ac" stroke-width=".5" d="M9 6h4v5h2.500L11 15.500 6.500 11H9z"/></svg>Téléchargements</a>
                    <a href="#" class="pl-5 mt-[21px]"><svg class="w-4 h-4 shrink-0" viewBox="0 0 16 16"><path fill="#f2db84" stroke="#ccae55" d="M.5 2.500l1-1h5l1 1h8v10H.5z"/><path fill="#8fd0f2" stroke="#4691c4" d="M2.500 14V9.500l1-1h8l1 1V14h-2v-3h-6v3z"/></svg>Bibliothèques</a>
                    <a href="#" class="pl-[30px]"><svg class="w-4 h-4 shrink-0" viewBox="0 0 16 16"><use href="#sheet"/><path stroke="#8aa0c8" d="M4 4.500h5M4 6.500h8M4 8.500h4M4 10.500h4M4 12.500h8"/><path fill="#3b86c8" d="M9 7h4v4H9z"/></svg>Documents</a>
                    <a href="#" class="pl-[30px]"><svg class="w-4 h-4 shrink-0" viewBox="0 0 16 16"><path fill="#fff" stroke="#8f989f" d="M.5 2.500h15v11H.5z"/><path fill="#8ecbf0" d="M2 4h12v4H2z"/><path fill="#2f8a6b" d="M2 7q6 0 12 3v2H2z"/></svg>Images</a>
                    <a href="#" class="pl-[30px]"><svg class="w-4 h-4 shrink-0" viewBox="0 0 16 16"><ellipse cx="5.500" cy="12.500" rx="4" ry="3" fill="#2b8fd8"/><path fill="none" stroke="#2b7fc0" stroke-width="1.500" d="M9 12V1q0 3 3 4t2 5"/></svg>Musique</a>
                    <a href="#" class="pl-[30px]"><svg class="w-4 h-4 shrink-0" viewBox="0 0 16 16"><path fill="#222" d="M1 1h14v14H1z"/><path stroke="#ddd" stroke-dasharray="1 1" d="M2.500 1v14M13.500 1v14"/><path fill="#3f94d8" d="M4 2h8v5H4zM4 9h8v5H4z"/><path fill="#a8603c" d="M4 5l3-2v4H4zM9 9h3v4z"/></svg>Vidéos</a>
                    <a href="#" class="pl-5 mt-[21px]"><svg class="w-4 h-4 shrink-0" viewBox="0 0 16 16"><path fill="#cfd3d6" stroke="#888" stroke-width=".7" d="M.5 4.500h2v8h-2zM3.500 1.500h12v9h-12z"/><path fill="#1414b0" d="M5 3h9v6H5z"/><path fill="#5a7ce8" d="M9 3h5v3z"/><path fill="#999" d="M8 11h3v2H8zM6 13h7v1H6z"/></svg>Ordinateur</a>
                    <a href="#" class="pl-[30px]"><svg class="w-4 h-4 shrink-0" viewBox="0 0 16 16"><path fill="#e8602c" d="M3 1l4-1-1 4-4 1z"/><path fill="#84bf3c" d="M8 1l4 0-1 4H7z"/><path fill="#4a9ce0" d="M2 6l4-1-1 4H1z"/><path fill="#f8c43a" d="M7 5h4l-1 4H6z"/><path fill="#a8aeb4" d="M3 8h10l3 3H0z"/><path fill="#4f7686" stroke="#8c9298" d="M.5 10.500h15v4H.5z"/><path fill="#6fe04a" d="M12 12h2v1h-2z"/></svg>OS (C:)</a>
                    <a href="#" class="pl-5 mt-[21px]"><svg class="w-4 h-4 shrink-0" viewBox="0 0 16 16"><circle cx="5.500" cy="5.500" r="5" fill="#2f86d8"/><path fill="#48b848" d="M2 2l4-1-1 4-3 3zM7 2l3 1-1 3z"/><path fill="#1414b0" stroke="#8894b4" d="M6.500 4.500h9v7h-9z"/><path fill="#999" d="M10 12h2v2h2v1H8v-1h2z"/></svg>Réseau</a>
                </nav>
                <!-- File list -->
                <div class="relative flex-1 min-w-0 pl-[15px]">
                    <svg class="absolute left-[139px] top-0.5 w-[7px] h-1" viewBox="0 0 7 4"><path fill="#5f8cab" d="M0 4h7L3.500 0z"/></svg>
                    <table class="table-fixed border-separate border-spacing-0 w-[578px] text-left text-[#6d6d6d] whitespace-nowrap [&_td]:h-[21px] [&_td]:border-y [&_td]:border-transparent [&_td]:py-0 [&_td]:leading-[19px]">
                        <thead class="text-[#4c607a] [&_th]:h-[31px] [&_th]:align-top [&_th]:pt-[5px] [&_th]:font-normal [&_th:not(.last)]:bg-[linear-gradient(#d8e2ee,#fcfcfc)] [&_th]:bg-size-[1px_24px] [&_th]:bg-no-repeat [&_th]:bg-right-top">
                            <tr><th class="w-[258px] pl-[3px]">Nom</th><th class="w-[120px] pl-1.5">Modifié le</th><th class="w-[120px] pl-1.5">Type</th><th class="last w-[76px] pl-1.5">Taille</th><th></th></tr>
                        </thead>
                        <tbody>
                            <tr><td class="pl-[3px]"><span class="flex items-center gap-[5px] text-black"><svg class="w-4 h-4" viewBox="0 0 16 16"><use href="#sheet"/><circle cx="4" cy="11.500" r="4" fill="#4b86d8"/><path fill="none" stroke="#fff" stroke-dasharray="4 2" d="M1.500 11.500a2.500 2.500 0 1 0 5 0 2.500 2.500 0 1 0-5 0"/></svg>AdobeFnt16.lst</span></td><td class="pl-1.5 text-[11px]">24.08.2015 09:59</td><td class="pl-1.5">Fichier LST</td><td class="pr-1 text-right">1 Ko</td></tr>
                            <tr class="[&>td]:border-[#7da2ce]!"><td class="pl-0.5 border-l rounded-l-[3px]"><span class="flex items-center gap-[5px] text-black"><svg class="w-4 h-4"><use href="#synced"/></svg>HelveNeuBolCon</span></td><td class="pl-1.5 text-[11px]">28.04.2007 22:55</td><td class="pl-1.5">Fichier</td><td class="pr-[3px] text-right border-r rounded-r-[3px]">0 Ko</td></tr>
                            <tr><td class="pl-[3px]"><span class="flex items-center gap-[5px] text-black"><svg class="w-4 h-4"><use href="#synced"/></svg>HelveNeuCon</span></td><td class="pl-1.5 text-[11px]">28.04.2007 22:55</td><td class="pl-1.5">Fichier</td><td class="pr-1 text-right">0 Ko</td></tr>
                            <tr><td class="pl-[3px]"><span class="flex items-center gap-[5px] text-black"><svg class="w-4 h-4"><use href="#synced"/></svg>HelveticaNeue-BoldCond</span></td><td class="pl-1.5 text-[11px]">21.07.2014 15:03</td><td class="pl-1.5">Fichier</td><td class="pr-1 text-right">0 Ko</td></tr>
                            <tr><td class="pl-[3px]"><span class="flex items-center gap-[5px] text-black"><svg class="w-4 h-4"><use href="#synced"/></svg>HelveticaNeue-Condensed</span></td><td class="pl-1.5 text-[11px]">21.07.2014 15:03</td><td class="pl-1.5">Fichier</td><td class="pr-1 text-right">0 Ko</td></tr>
                        </tbody>
                    </table>
                </div>
            </div>
            <!-- Details pane -->
            <div class="h-[53px] shrink-0 flex border-t-2 border-[#ccd9ea] bg-[#f1f5fb] text-[#1e395b]">
                <svg class="ml-5 mt-1 w-10 h-[43px]" viewBox="0 0 40 43"><defs><linearGradient id="fold"><stop offset="0" stop-color="#fdf0ac"/><stop offset="1" stop-color="#e0bf52"/></linearGradient></defs><path fill="#c8ccd4" d="M26 36l12-8-6 8-6 4z"/><path fill="#d8b448" d="M9 3h18v36L9 41z"/><path fill="url(#fold)" d="M12 5l15-2v21l2 2v12l-17 3z"/><path fill="url(#fold)" d="M1 1l9 5v21l-2 15-7-7z"/><path fill="#fff" d="M26 27h1v6h-1z"/><path fill="#4a9be4" d="M26 33h1v3h-1z"/></svg>
                <span class="ml-[19px] mt-1.5">5 élément(s)</span>
            </div>
        </div>
    </div>
</body>
</html>
